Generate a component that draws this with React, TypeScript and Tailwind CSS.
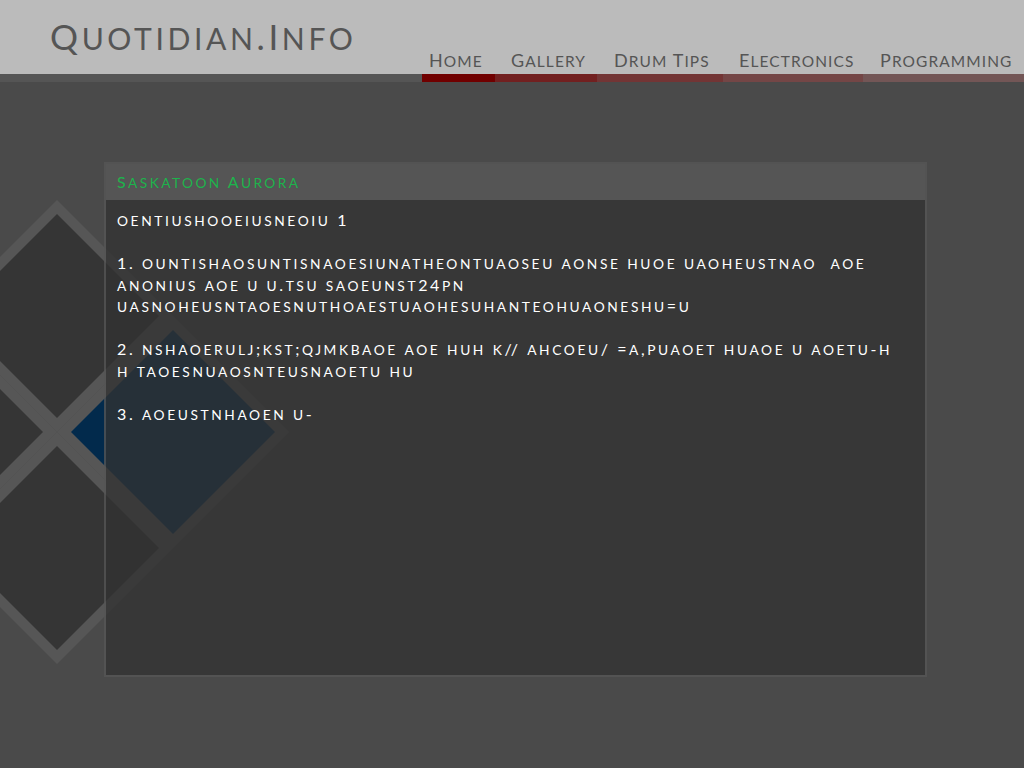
import { Fragment } from 'react'

const NAV = [
  { label: 'Home', w: 'w-[73px]', pad: 'pl-[7px]', bar: 'bg-[#700000]' },
  { label: 'Gallery', w: 'w-[102px]', pad: 'pl-[16px]', bar: 'bg-[#722020]' },
  { label: 'Drum Tips', w: 'w-[126px]', pad: 'pl-[17px]', bar: 'bg-[#733535]' },
  { label: 'Electronics', w: 'w-[140px]', pad: 'pl-[16px]', bar: 'bg-[#744646]' },
  { label: 'Programming', w: 'w-[161px]', pad: 'pl-[17px]', bar: 'bg-[#735656]' },
]

const LINES = [
  'oentiushooeiusneoiu 1',
  '',
  '1. ountishaosuntisnaoesiunatheontuaoseu aonse huoe uaoheustnao\u00a0 aoe',
  'anonius aoe u u.tsu saoeunst24pn',
  'uasnoheusntaoesnuthoaestuaohesuhanteohuaoneshu=u',
  '',
  '2. nshaoerulj;kst;qjmkbaoe aoe huh k// ahcoeu/ =a,puaoet huaoe u aoetu-h',
  'h taoesnuaosnteusnaoetu hu',
  '',
  '3. aoeustnhaoen u-',
]

// small caps: lowercase letters become smaller capitals
function Caps({ text }: { text: string }) {
  const parts = text.match(/[a-z]+|[^a-z]+/g) ?? []
  return (
    <>
      {parts.map((p, i) =>
        /^[a-z]/.test(p) ? (
          <span key={i} className="text-[0.86em]">
            {p.toUpperCase()}
          </span>
        ) : (
          <Fragment key={i}>{p}</Fragment>
        ),
      )}
    </>
  )
}

function Diamonds() {
  const d = (cx: number, cy: number, r: number) =>
    `${cx},${cy - r} ${cx + r},${cy} ${cx},${cy + r} ${cx - r},${cy}`
  const cells = [
    { x: 57, y: 316, fill: '#353535' },
    { x: -59, y: 432, fill: '#353535' },
    { x: 57, y: 548, fill: '#353535' },
    { x: 173, y: 432, fill: '#022a4c' },
  ]
  return (
    <svg className="pointer-events-none absolute left-0 top-0" width="320" height="768">
      {cells.map((c, i) => (
        <polygon key={'o' + i} points={d(c.x, c.y, 116)} fill="#565656" />
      ))}
      {cells.map((c, i) => (
        <polygon key={'i' + i} points={d(c.x, c.y, 102)} fill={c.fill} />
      ))}
    </svg>
  )
}

export default function App() {
  return (
    <div className="relative min-h-screen bg-[#4a4a4a] font-['Lato',sans-serif]">
      <Diamonds />
      <header className="relative">
        <div className="flex h-[74px] bg-[#bbbbbb]">
          <div className="flex-1 pl-[50px] pt-[19px]">
            <span className="text-[35px] leading-[35px] tracking-[3.6px] text-[#555]">
              <Caps text="Quotidian.Info" />
            </span>
          </div>
          <nav className="flex items-end pb-[4px]">
            {NAV.map((n) => (
              <div
                key={n.label}
                className={`${n.w} ${n.pad} text-[18px] leading-[18px] tracking-[1.1px] whitespace-nowrap text-[#555]`}
              >
                <Caps text={n.label} />
              </div>
            ))}
          </nav>
        </div>
        <div className="flex h-[8px] bg-[#555]">
          <div className="flex-1" />
          {NAV.map((n) => (
            <div key={n.label} className={`${n.w} ${n.bar}`} />
          ))}
        </div>
      </header>

      <main className="relative pl-[104px] pt-[80px]">
        <section className="flex h-[515px] w-[823px] flex-col border-2 border-[#555]/80">
          <div className="h-[36px] bg-[#555] pl-[11px] pt-[10px] text-[16px] leading-[16px] tracking-[2.4px] text-[#1db34c]">
            <Caps text="Saskatoon Aurora" />
          </div>
          <div className="flex-1 bg-[rgba(50,50,50,0.76)] px-[11px] pt-[9px] text-[16px] leading-[21.5px] tracking-[2.6px] text-white">
            {LINES.map((l, i) => (
              <div key={i} className="h-[21.5px] whitespace-nowrap">
                <Caps text={l} />
              </div>
            ))}
          </div>
        </section>
      </main>
    </div>
  )
}
